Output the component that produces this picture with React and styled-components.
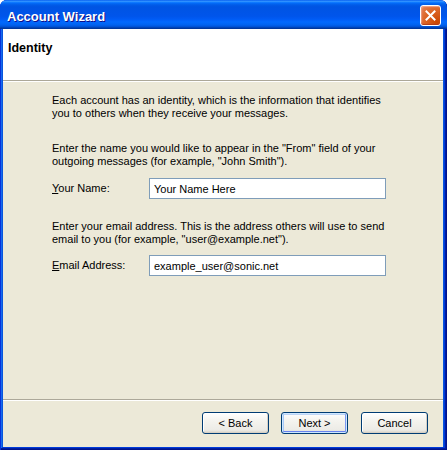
import React from 'react';
import styled, { createGlobalStyle } from 'styled-components';

const GlobalStyle = createGlobalStyle`
  html, body {
    margin: 0;
    padding: 0;
    background: #ffffff;
  }
  body {
    font-family: "Liberation Sans", Arial, sans-serif;
    font-size: 11px;
  }
`;

const Window = styled.div`
  width: 447px;
  height: 450px;
  display: flex;
  flex-direction: column;
  box-sizing: border-box;
  border-radius: 7px 7px 0 0;
  overflow: hidden;
  background: #0855dd;
  padding: 0 4px 3px 3px;
  box-shadow:
    inset 1px 0 #0831d9,
    inset -1px -1px #00138c,
    inset -2px -2px #001ea0,
    inset 2px 0 #166aee,
    inset -3px -3px #003bda;
`;

const TitleBar = styled.div`
  height: 29px;
  margin: 0 -4px 0 -3px;
  padding: 5px 6px 0 7px;
  box-sizing: border-box;
  display: flex;
  align-items: flex-start;
  background: linear-gradient(
    180deg,
    #0058ee 0%,
    #3593ff 4%,
    #288eff 6%,
    #127dff 8%,
    #036ffc 10%,
    #0262ee 14%,
    #0057e5 20%,
    #0054e3 24%,
    #0055eb 56%,
    #005bf5 66%,
    #026afe 76%,
    #0062ef 86%,
    #0052d6 92%,
    #0040ab 96%,
    #003092 100%
  );
`;

const Title = styled.span`
  margin-top: 4px;
  color: #ffffff;
  font-weight: bold;
  font-size: 13px;
  line-height: 15px;
  text-shadow: 1px 1px #0f1089;
`;

const CloseButton = styled.div`
  margin-left: auto;
  width: 21px;
  height: 21px;
  box-sizing: border-box;
  border: 1px solid #ffffff;
  border-radius: 3px;
  background: radial-gradient(circle at 85% 85%, #cc4600 0%, #dc6527 55%, #e5855b 100%);
  display: flex;
  align-items: center;
  justify-content: center;
  box-shadow: inset 0 -1px 1px #b13d1b, inset 1px 1px 1px #f3a58a;
`;

const Header = styled.div`
  height: 52px;
  background: #ffffff;
  padding: 12px 5px 0;
  box-sizing: border-box;
  border-bottom: 1px solid #aca899;
  box-shadow: 0 1px #ffffff;
`;

const HeaderTitle = styled.div`
  font-weight: bold;
  font-size: 12.5px;
  line-height: 14px;
  color: #000000;
`;

const Content = styled.div`
  flex: 1;
  margin-top: 1px;
  background: #ece9d8;
  padding: 12px 0 0 49px;
  border-bottom: 1px solid #aca899;
`;

const Para = styled.p`
  margin: ${(p) => p.$top}px 0 0;
  width: 340px;
  line-height: 13px;
  color: #000000;
`;

const FieldRow = styled.div`
  display: flex;
  align-items: center;
  margin-top: ${(p) => p.$top}px;
`;

const Label = styled.label`
  width: 97px;
  line-height: 13px;
  color: #000000;
`;

const TextInput = styled.input`
  width: 237px;
  height: 21px;
  box-sizing: border-box;
  border: 1px solid #7f9db9;
  background: #ffffff;
  padding: 0 4px;
  margin: 0;
  font-family: "Liberation Sans", Arial, sans-serif;
  font-size: 11px;
  color: #000000;
  outline: none;
`;

const Footer = styled.div`
  height: 47px;
  box-sizing: border-box;
  background: #ece9d8;
  border-top: 1px solid #ffffff;
  display: flex;
  justify-content: flex-end;
  align-items: flex-start;
  gap: 12px;
  padding: 11px 15px 0 0;
`;

const Button = styled.button`
  width: 67px;
  height: 22px;
  box-sizing: border-box;
  margin-left: ${(p) => p.$spaced ? 1 : 0}px;
  border: 1px solid #003c74;
  border-radius: 3px;
  background: linear-gradient(180deg, #ffffff 0%, #f4f3ee 40%, #ecebe6 85%, #d6d0c5 100%);
  font-family: "Liberation Sans", Arial, sans-serif;
  font-size: 11px;
  color: #000000;
  padding: 0;
  box-shadow: ${(p) =>
    p.$default
      ? 'inset 0 0 0 1px #cee7ff, inset 0 -2px 0 #6982ee, inset -2px 0 0 #7d99f1, inset 2px 0 0 #a9caf8, inset 0 2px 0 #bcd4f6'
      : 'inset -1px -1px 0 #d6d0c5, inset 1px 1px 0 #ffffff'};
`;

const CloseIcon = () => (
  <svg width="11" height="11" viewBox="0 0 11 11">
    <path d="M1.5 1.5 L9.5 9.5 M9.5 1.5 L1.5 9.5" stroke="#ffffff" strokeWidth="2" strokeLinecap="square" />
  </svg>
);

export default function App() {
  return (
    <>
      <GlobalStyle />
      <Window>
        <TitleBar>
          <Title>Account Wizard</Title>
          <CloseButton>
            <CloseIcon />
          </CloseButton>
        </TitleBar>
        <Header>
          <HeaderTitle>Identity</HeaderTitle>
        </Header>
        <Content>
          <Para $top={0}>
            Each account has an identity, which is the information that identifies you to others when they
            receive your messages.
          </Para>
          <Para $top={22}>
            Enter the name you would like to appear in the "From" field of your outgoing messages (for example,
            "John Smith").
          </Para>
          <FieldRow $top={10}>
            <Label>
              <u>Y</u>our Name:
            </Label>
            <TextInput defaultValue="Your Name Here" />
          </FieldRow>
          <Para $top={21}>
            Enter your email address. This is the address others will use to send email to you (for example,
            "user@example.net").
          </Para>
          <FieldRow $top={9}>
            <Label>
              <u>E</u>mail Address:
            </Label>
            <TextInput defaultValue="example_user@sonic.net" />
          </FieldRow>
        </Content>
        <Footer>
          <Button>&lt; Back</Button>
          <Button $default>Next &gt;</Button>
          <Button $spaced>Cancel</Button>
        </Footer>
      </Window>
    </>
  );
}
